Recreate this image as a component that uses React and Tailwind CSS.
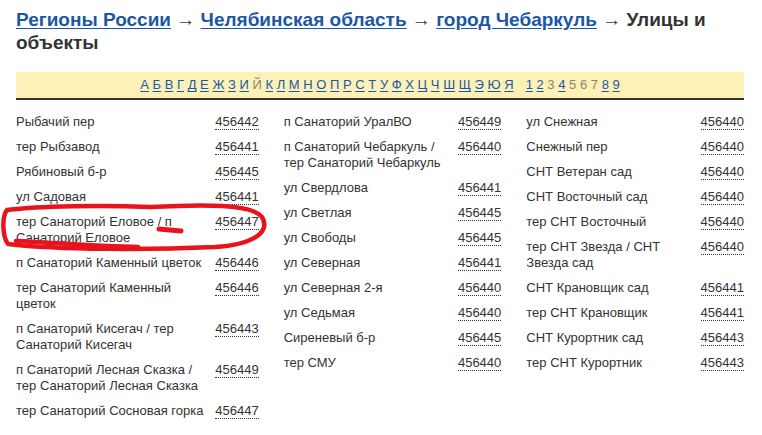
const letters = [
  ["А", true], ["Б", true], ["В", true], ["Г", true], ["Д", true], ["Е", true], ["Ж", true],
  ["З", true], ["И", true], ["Й", false], ["К", true], ["Л", true], ["М", true], ["Н", true],
  ["О", true], ["П", true], ["Р", true], ["С", true], ["Т", true], ["У", true], ["Ф", true],
  ["Х", true], ["Ц", true], ["Ч", true], ["Ш", true], ["Щ", true], ["Э", true], ["Ю", true],
  ["Я", true],
];
const digits = [
  ["1", true], ["2", true], ["3", false], ["4", true], ["5", false],
  ["6", false], ["7", false], ["8", true], ["9", true],
];

const columns = [
  [
    ["Рыбачий пер", "456442"],
    ["тер Рыбзавод", "456441"],
    ["Рябиновый б-р", "456445"],
    ["ул Садовая", "456441"],
    ["тер Санаторий Еловое / п Санаторий Еловое", "456447"],
    ["п Санаторий Каменный цветок", "456446"],
    ["тер Санаторий Каменный цветок", "456446"],
    ["п Санаторий Кисегач / тер Санаторий Кисегач", "456443"],
    ["п Санаторий Лесная Сказка / тер Санаторий Лесная Сказка", "456449"],
    ["тер Санаторий Сосновая горка", "456447"],
  ],
  [
    ["п Санаторий УралВО", "456449"],
    ["п Санаторий Чебаркуль / тер Санаторий Чебаркуль", "456440"],
    ["ул Свердлова", "456441"],
    ["ул Светлая", "456445"],
    ["ул Свободы", "456445"],
    ["ул Северная", "456441"],
    ["ул Северная 2-я", "456440"],
    ["ул Седьмая", "456440"],
    ["Сиреневый б-р", "456445"],
    ["тер СМУ", "456440"],
  ],
  [
    ["ул Снежная", "456440"],
    ["Снежный пер", "456440"],
    ["СНТ Ветеран сад", "456440"],
    ["СНТ Восточный сад", "456440"],
    ["тер СНТ Восточный", "456440"],
    ["тер СНТ Звезда / СНТ Звезда сад", "456440"],
    ["СНТ Крановщик сад", "456441"],
    ["тер СНТ Крановщик", "456441"],
    ["СНТ Курортник сад", "456443"],
    ["тер СНТ Курортник", "456443"],
  ],
];

function Nav({ items }) {
  return items.map(([ch, active], i) => (
    <span key={ch}>
      {active ? (
        <a href="#" className="text-[#1b57a5] underline underline-offset-2">{ch}</a>
      ) : (
        <span className="text-[#8c8470]">{ch}</span>
      )}
      {i < items.length - 1 ? " " : ""}
    </span>
  ));
}

export default function App() {
  return (
    <div className="relative h-[435px] w-[762px] overflow-hidden bg-white font-['Liberation_Sans',Arial,sans-serif] text-[#333]">
      <div className="mx-[16px] w-[728px] pt-[8px]">
        <h1 className="text-[19px] font-bold leading-[23px]">
          <a href="#" className="text-[#1b57a5] underline underline-offset-2">Регионы России</a> →{" "}
          <a href="#" className="text-[#1b57a5] underline underline-offset-2">Челябинская область</a> →{" "}
          <a href="#" className="text-[#1b57a5] underline underline-offset-2">город Чебаркуль</a> → Улицы и объекты
        </h1>

        <div className="mt-[18px] flex h-[28px] items-center justify-center border-b-2 border-[#333] bg-[#fdf1b8] text-[13px]">
          <span>
            <Nav items={letters} />
          </span>
          <span className="ml-[12px]">
            <Nav items={digits} />
          </span>
        </div>

        <div className="flex pt-[14px] text-[13px] leading-[16px]">
          {columns.map((col, ci) => (
            <div key={ci} className={ci === 0 ? "w-[243px]" : "w-[243px] pl-[25px]"}>
              {col.map(([name, zip]) => (
                <div key={name} className="mb-[9px] flex items-start">
                  <span className="flex-1 pr-[10px]">{name}</span>
                  <a href="#" className="shrink-0 border-b border-dotted border-[#333] leading-[15px]">{zip}</a>
                </div>
              ))}
            </div>
          ))}
        </div>
      </div>

      <svg className="pointer-events-none absolute left-0 top-0" width="762" height="435" viewBox="0 0 762 435">
        <g fill="none" stroke="#e8131c" strokeLinecap="round" strokeLinejoin="round">
          <path d="M159 229 L181 231" strokeWidth="5" />
          <path
            d="M150 207 C205 204 252 204 262 217 C270 230 258 244 215 247 C150 250 60 250 8 244 C2 236 2 216 7 210 C40 206 100 205 150 207"
            strokeWidth="4.5"
          />
          <path d="M16 241 C55 243 100 246 138 247" strokeWidth="4.5" />
        </g>
      </svg>
    </div>
  );
}
